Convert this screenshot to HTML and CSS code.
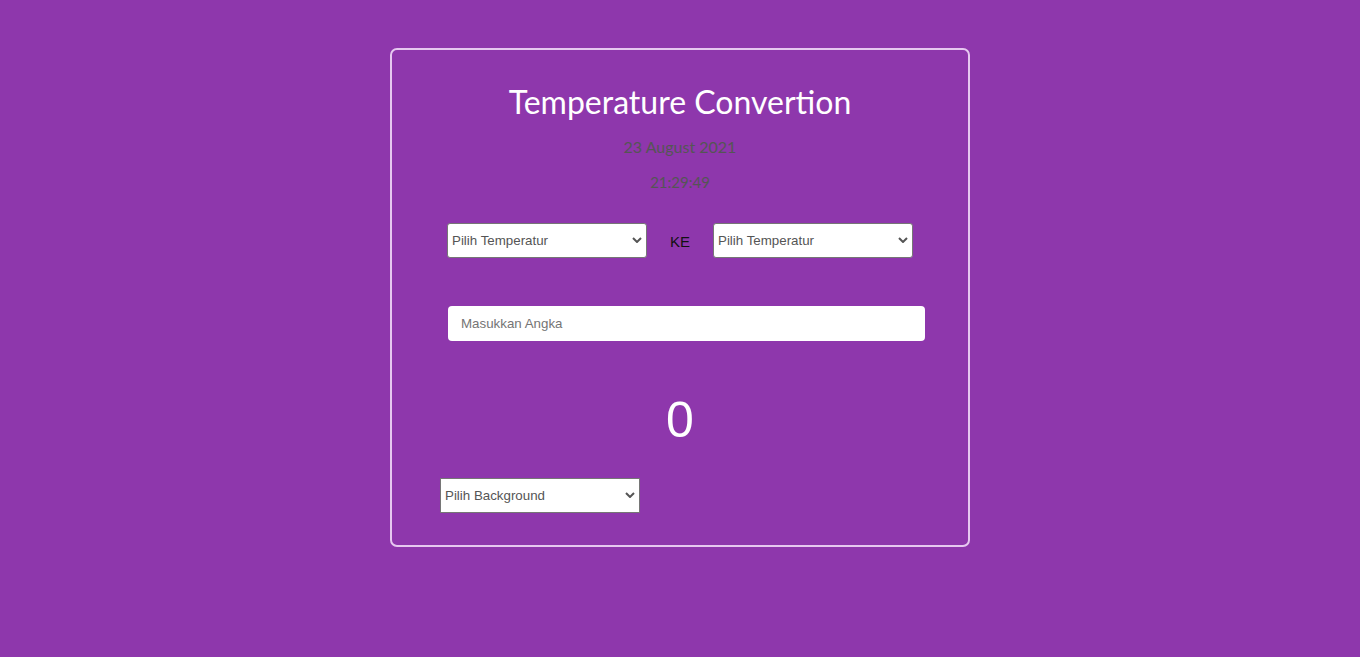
FILE: index.html
```html
<!DOCTYPE html>
<html>
<head>
<meta charset="utf-8">
<link rel="stylesheet" href="styles.css">
</head>
<body>
<div class="card">
  <h1 class="title">Temperature Convertion</h1>
  <p class="date">23 August 2021</p>
  <p class="time">21:29:49</p>
  <div class="row">
    <div class="selwrap">
      <select class="sel"><option>Pilih Temperatur</option></select>
      <svg class="chev" width="10" height="6" viewBox="0 0 10 6"><path d="M1 1 L5 5 L9 1" fill="none" stroke="#555" stroke-width="2"/></svg>
    </div>
    <span class="ke">KE</span>
    <div class="selwrap">
      <select class="sel"><option>Pilih Temperatur</option></select>
      <svg class="chev" width="10" height="6" viewBox="0 0 10 6"><path d="M1 1 L5 5 L9 1" fill="none" stroke="#555" stroke-width="2"/></svg>
    </div>
  </div>
  <div class="inwrap">
    <input class="num" type="text" placeholder="Masukkan Angka">
  </div>
  <div class="result">0</div>
  <div class="bgrow">
    <div class="selwrap">
      <select class="sel square"><option>Pilih Background</option></select>
      <svg class="chev" width="10" height="6" viewBox="0 0 10 6"><path d="M1 1 L5 5 L9 1" fill="none" stroke="#555" stroke-width="2"/></svg>
    </div>
  </div>
</div>
</body>
</html>
```
FILE: styles.css
```css
html, body { margin: 0; padding: 0; }
body {
  background: #8e37ac;
  font-family: Lato, "Liberation Sans", sans-serif;
  height: 657px;
  overflow: hidden;
}
.card {
  box-sizing: border-box;
  width: 580px;
  height: 499px;
  margin: 48px auto 0;
  border: 2px solid #e6c8f0;
  border-radius: 7px;
  display: flex;
  flex-direction: column;
  align-items: center;
}
.title {
  margin: 32px 0 0;
  font-weight: 400;
  font-size: 32px;
  line-height: 40px;
  color: #fff;
}
.date {
  margin: 15px 0 0;
  font-size: 16px;
  line-height: 20px;
  color: #555;
}
.time {
  margin: 15px 0 0;
  font-size: 15px;
  line-height: 20px;
  color: #555;
}
.row {
  margin-top: 31px;
  display: flex;
  align-items: center;
}
.selwrap {
  position: relative;
  width: 200px;
  height: 35px;
}
.sel {
  -webkit-appearance: none;
  appearance: none;
  box-sizing: border-box;
  width: 200px;
  height: 35px;
  border: 1px solid #767676;
  border-radius: 3px;
  background: #fff;
  font-family: "Liberation Sans", Arial, sans-serif;
  font-size: 13.33px;
  color: #555;
  padding: 0 20px 0 4px;
  margin: 0;
  display: block;
}
.sel.square { border-radius: 0; }
.chev {
  position: absolute;
  right: 5px;
  top: 14px;
  pointer-events: none;
}
.ke {
  width: 66px;
  text-align: center;
  font-family: "Liberation Sans", Arial, sans-serif;
  font-size: 15px;
  color: #111;
  padding-top: 2px;
}
.inwrap {
  margin-top: 48px;
  width: 477px;
  margin-left: 13px;
}
.num {
  box-sizing: border-box;
  width: 477px;
  height: 35px;
  border: none;
  border-radius: 4px;
  padding: 0 13px;
  font-family: "Liberation Sans", Arial, sans-serif;
  font-size: 13.33px;
  outline: none;
  display: block;
}
.num::placeholder { color: #757575; }
.result {
  margin-top: 49px;
  font-family: "Liberation Sans", Arial, sans-serif;
  font-size: 50px;
  line-height: 60px;
  color: #fff;
}
.bgrow {
  align-self: stretch;
  padding-left: 48px;
  margin-top: 28px;
}
```
